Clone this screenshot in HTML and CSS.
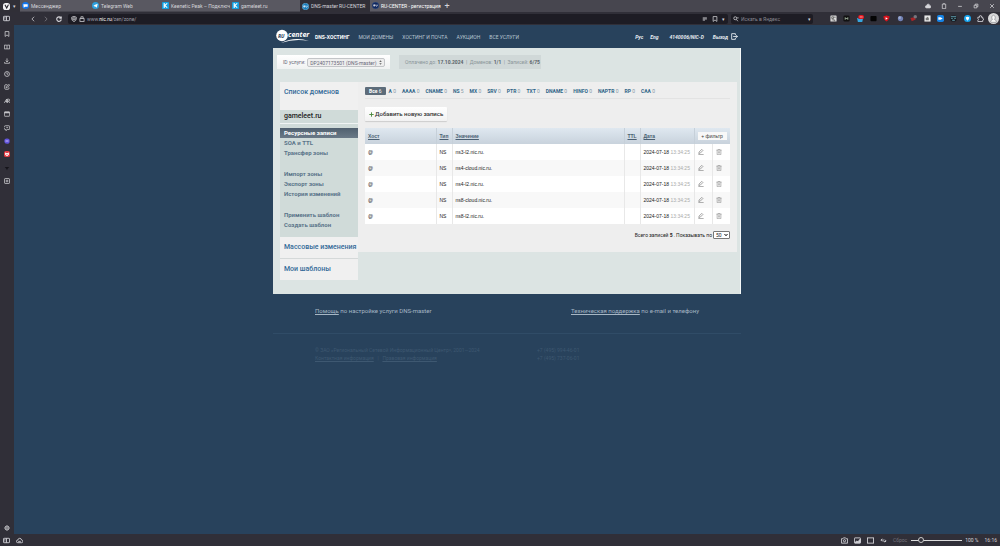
FILE: index.html
```html
<!DOCTYPE html>
<html lang="ru">
<head>
<meta charset="utf-8">
<title>RU-CENTER</title>
<link rel="stylesheet" href="styles.css">
</head>
<body>
<svg class="defs" aria-hidden="true">
  <symbol id="bookmark" viewBox="0 0 16 16"><path d="M3 1.500h10v13l-5-4-5 4z"/></symbol>
  <symbol id="panel" viewBox="0 0 16 16"><rect x="1" y="3" width="14" height="10" rx="1.500"/><path d="M8 3v10M3 6h2.500M3 9h2.500"/></symbol>
  <symbol id="book" viewBox="0 0 16 16"><path d="M1 3h5l2 1 2-1h5v10H1zM8 4v9"/></symbol>
  <symbol id="download" viewBox="0 0 16 16"><path d="M8 1v9M4.500 7L8 10.500 11.500 7M1.500 11v3h13v-3"/></symbol>
  <symbol id="clock" viewBox="0 0 16 16"><circle cx="8" cy="8" r="6.500"/><path d="M8 4v4.500h3"/></symbol>
  <symbol id="note" viewBox="0 0 16 16"><path d="M9 2H4Q2 2 2 4v8q0 2 2 2h7q2 0 2-2V9M6 10l1-3 6-6 2 2-6 6z"/></symbol>
  <symbol id="translate" viewBox="0 0 16 16"><path d="M1 13L7 3l1 10M4 9h4M9 13V3h3q3 0 3 2.500T12 8H9M12 8l3 5"/></symbol>
  <symbol id="window" viewBox="0 0 16 16"><rect x="1" y="2" width="14" height="12" rx="1.500"/><path d="M1 4.500h14" stroke-width="3"/></symbol>
  <symbol id="chat" viewBox="0 0 16 16"><path d="M4 2h9q2 0 2 2v6q0 2-2 2H9l-4 3v-3H4M1 6V4q0-2 3-2M1 8v2q0 2 3 2M6 7h5"/></symbol>
  <symbol id="plusbox" viewBox="0 0 16 16"><rect x="1.500" y="1.500" width="13" height="13" rx="1.500"/><path d="M8 4.500v7M4.500 8h7"/></symbol>
  <symbol id="gear" viewBox="0 0 16 16"><circle cx="8" cy="8" r="5"/><circle cx="8" cy="8" r="1.500"/><path d="M8 .5V3M8 13v2.500M.5 8H3M13 8h2.500M2.700 2.700l1.700 1.700M11.600 11.600l1.700 1.700M2.700 13.300l1.700-1.700M11.600 4.400l1.700-1.700"/></symbol>
  <symbol id="cloud" viewBox="0 0 16 16"><path d="M4 13q-3 0-3-3t3-3q1-4 4.500-4T13 7q2.500 0 2.500 3T13 13z" fill="currentColor"/></symbol>
  <symbol id="cloudline" viewBox="0 0 16 16"><path d="M4 13q-3 0-3-3t3-3q1-4 4.500-4T13 7q2.500 0 2.500 3T13 13zM5 10h6"/></symbol>
  <symbol id="camera" viewBox="0 0 16 16"><path d="M1 4h3l1.500-2h5L12 4h3v10H1z"/><circle cx="8" cy="8.500" r="2.500"/></symbol>
  <symbol id="image" viewBox="0 0 16 16"><rect x="1" y="2" width="14" height="12" rx="1"/><path d="M2 13l4-4 3 2 5-6v8z" fill="currentColor"/></symbol>
  <symbol id="square" viewBox="0 0 16 16"><rect x="1" y="2" width="14" height="12"/></symbol>
  <symbol id="code" viewBox="0 0 16 16"><path d="M5 4L2 7l3 3M3 7h6M11 6l3 3-3 3M8 10h5"/></symbol>
  <symbol id="pencil" viewBox="0 0 16 16"><path d="M2 12l1-4 7-7 3 3-7 7zM1 15h14"/></symbol>
  <symbol id="trash" viewBox="0 0 16 16"><path d="M1 3h14M5.500 3V1h5v2M3 3v12h10V3M6.500 6v6M9.500 6v6" stroke-width="1.500"/></symbol>
  <symbol id="exit" viewBox="0 0 16 16"><path d="M10 5V1.500H1.500v13H10V11M5 8h10M12 5l3 3-3 3"/></symbol>
  <symbol id="shield" viewBox="0 0 16 16"><path d="M8 1l6 2v5q0 4-6 7-6-3-6-7V3z"/><path d="M5 5h6v5H5z"/></symbol>
  <symbol id="lock" viewBox="0 0 16 16"><rect x="2.500" y="7" width="11" height="7.500"/><path d="M5 7V2h6v5"/></symbol>
  <symbol id="puzzle" viewBox="0 0 16 16"><path d="M2 5h4q-1-4 2-4t2 4h3v3q3 0 2 3l-2 1v3H2v-3q3-2 0-4z"/></symbol>
</svg>

<header class="tabbar">
  <button class="vivaldi" aria-label="Меню"><svg viewBox="0 0 16 16"><rect width="16" height="16" rx="6" fill="#f2f2f4"/><path d="M5 5l3.500 6.500L12 4.500" fill="none" stroke="#25242b" stroke-width="2.500" stroke-linecap="round"/></svg><span>▾</span></button>
  <nav class="tabs">
    <button class="tab"><svg class="fav" viewBox="0 0 16 16"><circle cx="8" cy="8" r="8" fill="#1277ee"/><path d="M3 5h10v6H7l-3 2z" fill="#fff"/></svg><span>Мессенджер</span></button>
    <button class="tab"><svg class="fav" viewBox="0 0 16 16"><circle cx="8" cy="8" r="8" fill="#2d9fdd"/><path d="M3 8l10-4-2 9-3-3-2 2V9z" fill="#fff"/></svg><span>Telegram Web</span></button>
    <button class="tab"><svg class="fav" viewBox="0 0 16 16"><rect width="16" height="16" rx="2" fill="#15a0df"/><path d="M5 2.500v11M12 3L6 8l6 5" fill="none" stroke="#fff" stroke-width="2.500"/></svg><span>Keenetic Peak – Подключи</span></button>
    <button class="tab"><svg class="fav" viewBox="0 0 16 16"><rect width="16" height="16" rx="2" fill="#15a0df"/><path d="M5 2.500v11M12 3L6 8l6 5" fill="none" stroke="#fff" stroke-width="2.500"/></svg><span>gameleet.ru</span></button>
    <button class="tab dark"><svg class="fav" viewBox="0 0 16 16"><circle cx="8" cy="8" r="7.500" fill="#167bbb" stroke="#8ed0f4"/><path d="M4 10V6h2q2 0 1 2H4l3 2M9 6v3q2 2 3 0V6" fill="none" stroke="#fff" stroke-width="1.300"/></svg><span>DNS-master RU-CENTER</span></button>
    <button class="tab active"><svg class="fav" viewBox="0 0 16 16"><circle cx="8" cy="8" r="7.500" fill="#10265c" stroke="#28518e"/><path d="M4 10V6h2q2 0 1 2H4l3 2M9 6v3q2 2 3 0V6" fill="none" stroke="#fff" stroke-width="1.300"/></svg><span>RU-CENTER - регистрация</span></button>
    <button class="newtab" aria-label="Новая вкладка">+</button>
  </nav>
  <div class="wincontrols">
    <svg class="ico"><use href="#cloud"/></svg>
    <svg class="ico" viewBox="0 0 16 16"><path d="M3.500 3h9v12h-9zM6 1.500h4"/></svg>
    <svg class="ico" viewBox="0 0 16 16"><path d="M3 9h10"/></svg>
    <svg class="ico" viewBox="0 0 16 16"><path d="M3 6h7v7H3zM6 6V3h7v7h-3"/></svg>
    <svg class="ico" viewBox="0 0 16 16"><path d="M3 3l10 10M13 3L3 13"/></svg>
  </div>
</header>

<div class="toolbar">
  <svg class="ico"><use href="#panel"/></svg>
  <div class="navbtns">
    <svg class="ico" viewBox="0 0 16 16"><path d="M11 2L5 8l6 6"/></svg>
    <svg class="ico dim" viewBox="0 0 16 16"><path d="M5 2l6 6-6 6"/></svg>
    <svg class="ico bold" viewBox="0 0 16 16"><path d="M13 5A6 6 0 1 0 14 9M14 1v5H9"/></svg>
  </div>
  <div class="urlbar">
    <svg class="ico"><use href="#shield"/></svg>
    <svg class="ico"><use href="#lock"/></svg>
    <span class="url">www.<b>nic.ru</b>/zen/zone/</span>
    <svg class="ico" viewBox="0 0 16 16"><path d="M2 5h11M2 8h11M2 11h6"/></svg>
    <svg class="ico"><use href="#bookmark"/></svg>
    <span class="caret">▾</span>
  </div>
  <label class="search">
    <svg class="ico" viewBox="0 0 16 16"><circle cx="6" cy="6" r="4"/><path d="M9 9l4 5M11 5h4"/></svg>
    <input type="text" placeholder="Искать в Яндекс" aria-label="Поиск">
    <span class="caret">▾</span>
  </label>
  <div class="exts">
    <svg viewBox="0 0 16 16"><rect x="1" y="1" width="14" height="14" rx="1" fill="#ddd"/><path d="M4 4h4v4H4zM9 5h4M4 11h4M9 9v4h3" stroke="#444" fill="none" stroke-width="1.500"/></svg>
    <svg viewBox="0 0 16 16"><rect x="1" y="1" width="14" height="14" rx="3" fill="#111"/><path d="M5 5v6M11 5v6M5 8h6" stroke="#9aaa98" stroke-width="2"/></svg>
    <svg viewBox="0 0 16 16"><path d="M0 6l6 3 8-2-2 9H2z" fill="#37a6df"/><rect x="3" y="0" width="13" height="9" rx="4" fill="#e31921"/><path d="M6 4.500h7" stroke="#f7b5b5" stroke-width="2"/></svg>
    <svg viewBox="0 0 16 16"><rect x="1" y="2" width="14" height="12" rx="2" fill="#050505"/></svg>
    <svg viewBox="0 0 16 16"><path d="M8 1l7 2q0 8-7 12Q1 11 1 3z" fill="#d5131c"/><path d="M6 5v6l5-3z" fill="#fff"/></svg>
    <svg viewBox="0 0 16 16"><circle cx="8" cy="8" r="6" fill="#7181b5"/><circle cx="6" cy="6" r="3" fill="#9cabd0"/></svg>
    <svg viewBox="0 0 16 16"><path d="M1 7l9-2 3 5-9 4z" fill="#a82427"/><circle cx="12" cy="4" r="4" fill="#77767e"/></svg>
    <svg viewBox="0 0 16 16"><rect x="1" y="1" width="14" height="14" fill="#e8e8e8"/><path d="M4 12V8l4-4 3 3v5" fill="#777"/></svg>
    <svg viewBox="0 0 16 16"><rect width="16" height="16" rx="4" fill="#1683e5"/><path d="M3 5h5l5 3-5 3H3z" fill="#fff"/></svg>
    <svg viewBox="0 0 16 16"><rect x="1" y="1" width="14" height="14" rx="4" fill="#13191e"/><path d="M2 4h12M3 8h3M10 8h3M5 12h6" stroke="#70b5c8" stroke-width="2"/></svg>
    <svg viewBox="0 0 16 16"><circle cx="8" cy="8" r="8" fill="#1aa6ef"/><path d="M4 5l4-1 4 1q0 6-4 8-4-2-4-8" fill="#fff"/></svg>
    <svg class="ico"><use href="#puzzle"/></svg>
  </div>
  <svg class="avatar" viewBox="0 0 20 20"><circle cx="10" cy="10" r="10" fill="#d8d8da"/><path d="M5 17v-3l3-2q-2-3-1-6 3-4 6 0 1 3-1 6l3 2v3z" fill="#f7f7f7" stroke="#77777d"/></svg>
</div>

<div class="middle">
  <aside class="rail">
    <div class="railtop">
      <svg class="ico"><use href="#bookmark"/></svg>
      <svg class="ico"><use href="#book"/></svg>
      <svg class="ico"><use href="#download"/></svg>
      <svg class="ico"><use href="#clock"/></svg>
      <svg class="ico"><use href="#note"/></svg>
      <svg class="ico"><use href="#translate"/></svg>
      <svg class="ico"><use href="#window"/></svg>
      <svg class="ico"><use href="#chat"/></svg>
      <svg class="railpic" viewBox="0 0 16 16"><path d="M1 6q0-5 6-5h2q6 0 6 5v5q-2 5-7 4Q1 15 1 10z" fill="#6255dc"/><path d="M4 6h8v4H4z" fill="#a99af0"/></svg>
      <svg class="railpic" viewBox="0 0 16 16"><rect width="16" height="16" rx="5" fill="#e23840"/><path d="M3 4l5 2 5-2v6l-5 4-5-4z" fill="#fff"/><path d="M6 8h4l-2 3z" fill="#e23840"/></svg>
      <svg class="railpic" viewBox="0 0 16 16"><path d="M2 5h12l-4 4-2 5-2-4z" fill="#15141a"/></svg>
      <svg class="ico"><use href="#plusbox"/></svg>
    </div>
    <svg class="ico"><use href="#gear"/></svg>
  </aside>

  <main class="viewport">
    <div class="page">
      <div class="sitehead">
        <svg class="logo" viewBox="0 0 36 16"><circle cx="6" cy="6.500" r="5.800" fill="#fff"/><text x="2" y="9" class="logoru">RU</text><text x="12" y="8" class="logotext">center</text><path d="M5 14q14-7 28-2-14-3-28 2z" fill="#fff"/></svg>
        <nav class="sitenav">
          <a href="#" class="current">DNS-ХОСТИНГ</a><a href="#">МОИ ДОМЕНЫ</a><a href="#">ХОСТИНГ И ПОЧТА</a><a href="#">АУКЦИОН</a><a href="#">ВСЕ УСЛУГИ</a>
        </nav>
        <div class="account">
          <a href="#">Рус</a><a href="#" class="eng">Eng</a><a href="#" class="login">4140006/NIC-D</a><a href="#" class="exit">Выход <svg class="ico"><use href="#exit"/></svg></a>
        </div>
      </div>

      <div class="board">
        <div class="service">
          <div class="picker"><label for="svc">ID услуги:</label>
            <div class="selectbox"><select id="svc"><option>DP2407173501 (DNS-master)</option></select><svg class="updown" viewBox="0 0 16 16"><path d="M4 6l4-5 4 5zM4 10l4 5 4-5z" fill="#666"/></svg></div></div>
          <div class="paid">Оплачено до: <b>17.10.2024</b> &nbsp;|&nbsp; Доменов: <b>1/1</b> &nbsp;|&nbsp; Записей: <b>6/75</b></div>
        </div>

        <div class="columns">
          <nav class="menu">
            <a href="#" class="big">Список доменов</a>
            <div class="zone">
              <a href="#" class="domain">gameleet.ru</a>
              <ul>
                <li><a href="#" class="on">Ресурсные записи</a></li>
                <li><a href="#">SOA и TTL</a></li>
                <li><a href="#">Трансфер зоны</a></li>
              </ul>
              <ul>
                <li><a href="#">Импорт зоны</a></li>
                <li><a href="#">Экспорт зоны</a></li>
                <li><a href="#">История изменений</a></li>
              </ul>
              <ul>
                <li><a href="#">Применить шаблон</a></li>
                <li><a href="#">Создать шаблон</a></li>
              </ul>
            </div>
            <a href="#" class="big mass">Массовые изменения</a>
            <a href="#" class="big mine">Мои шаблоны</a>
          </nav>

          <section class="records">
            <div class="types">
              <a href="#" class="on">Все <i>6</i></a><a href="#">A <i>0</i></a><a href="#">AAAA <i>0</i></a><a href="#">CNAME <i>0</i></a><a href="#">NS <i>5</i></a><a href="#">MX <i>0</i></a><a href="#">SRV <i>0</i></a><a href="#">PTR <i>0</i></a><a href="#">TXT <i>0</i></a><a href="#">DNAME <i>0</i></a><a href="#">HINFO <i>0</i></a><a href="#">NAPTR <i>0</i></a><a href="#">RP <i>0</i></a><a href="#">CAA <i>0</i></a>
            </div>
            <button class="add"><svg viewBox="0 0 16 16"><path d="M8 1v14M1 8h14" stroke="#4b8a3c" stroke-width="3"/></svg>Добавить новую запись</button>
            <table>
              <colgroup><col class="c-host"><col class="c-type"><col class="c-value"><col class="c-type"><col class="c-date"><col class="c-act"><col class="c-act"></colgroup>
              <thead><tr><th><a href="#">Хост</a></th><th><a href="#">Тип</a></th><th><a href="#">Значение</a></th><th><a href="#">TTL</a></th><th><a href="#">Дата</a></th><th colspan="2" class="filtercell"><button class="filter">+ фильтр</button></th></tr></thead>
              <tbody>
                <tr><td>@</td><td>NS</td><td>ns3-l2.nic.ru.</td><td></td><td>2024-07-18 <span>13:34:25</span></td><td><svg class="ico"><use href="#pencil"/></svg></td><td><svg class="ico"><use href="#trash"/></svg></td></tr>
                <tr><td>@</td><td>NS</td><td>ns4-cloud.nic.ru.</td><td></td><td>2024-07-18 <span>13:34:25</span></td><td><svg class="ico"><use href="#pencil"/></svg></td><td><svg class="ico"><use href="#trash"/></svg></td></tr>
                <tr><td>@</td><td>NS</td><td>ns4-l2.nic.ru.</td><td></td><td>2024-07-18 <span>13:34:25</span></td><td><svg class="ico"><use href="#pencil"/></svg></td><td><svg class="ico"><use href="#trash"/></svg></td></tr>
                <tr><td>@</td><td>NS</td><td>ns8-cloud.nic.ru.</td><td></td><td>2024-07-18 <span>13:34:25</span></td><td><svg class="ico"><use href="#pencil"/></svg></td><td><svg class="ico"><use href="#trash"/></svg></td></tr>
                <tr><td>@</td><td>NS</td><td>ns8-l2.nic.ru.</td><td></td><td>2024-07-18 <span>13:34:25</span></td><td><svg class="ico"><use href="#pencil"/></svg></td><td><svg class="ico"><use href="#trash"/></svg></td></tr>
              </tbody>
            </table>
            <div class="pager"><span>Всего записей <b>5</b> .</span><label for="per">Показывать по</label><div class="selectbox"><select id="per"><option>50</option></select><svg class="down" viewBox="0 0 16 16"><path d="M2 4l6 7 6-7" fill="none" stroke="#111" stroke-width="4"/></svg></div></div>
          </section>
        </div>
      </div>

      <div class="help">
        <p><a href="#">Помощь</a> по настройке услуги DNS-master</p>
        <p><a href="#">Техническая поддержка</a> по e-mail и телефону</p>
      </div>
      <footer class="legal">
        <div>© ЗАО «Региональный Сетевой Информационный Центр», 2001—2024<br><a href="#">Контактная информация</a> &nbsp; | &nbsp; <a href="#">Правовая информация</a></div>
        <div>+7 (495) 994-46-01<br>+7 (495) 737-06-01</div>
      </footer>
    </div>
  </main>
</div>

<footer class="statusbar">
  <svg class="ico"><use href="#panel"/></svg>
  <svg class="ico"><use href="#cloudline"/></svg>
  <div class="statusright">
    <svg class="ico"><use href="#camera"/></svg>
    <svg class="ico"><use href="#image"/></svg>
    <svg class="ico"><use href="#square"/></svg>
    <svg class="ico"><use href="#code"/></svg>
    <label for="zoom" class="reset">Сброс</label>
    <input type="range" id="zoom" min="0" max="100" value="16">
    <span class="pct">100 %</span>
    <span>16:16</span>
  </div>
</footer>
</body>
</html>
```
FILE: styles.css
```css
* { box-sizing: border-box; }
body {
  margin: 0;
  height: 100vh;
  display: flex;
  flex-direction: column;
  overflow: hidden;
  background: #28425c;
  color: #d5d5da;
  font: 5px/8px Roboto, "Liberation Sans", sans-serif;
}
button, input, select { font: inherit; color: inherit; margin: 0; padding: 0; border: 0; background: none; }
a { color: inherit; text-decoration: none; }
.defs { position: absolute; width: 0; height: 0; }
.ico { width: 7px; height: 7px; flex: none; fill: none; stroke: currentColor; stroke-width: 2; }
.bold { stroke-width: 3; }
.dim { opacity: 0.5; }

/* browser frame */
.tabbar { display: flex; height: 12px; background: #47464f; }
.vivaldi { width: 20px; display: flex; align-items: center; gap: 3px; padding-left: 3px; background: #302f37; }
.vivaldi svg { width: 7px; height: 7px; }
.tabs { display: flex; flex: 1; }
.tab {
  width: 70px;
  height: 11px;
  padding: 0 0 0 2px;
  display: flex;
  align-items: center;
  gap: 2px;
  white-space: nowrap;
  background: #595861;
}
.tab.dark { height: 12px; background: #302f37; }
.tab.active { background: #5c5b64; color: #fff; }
.fav { width: 7px; height: 7px; flex: none; }
.newtab { width: 14px; font-size: 9px; }
.wincontrols { display: flex; align-items: center; width: 75px; justify-content: space-between; padding-right: 5px; }
.wincontrols .ico { width: 6px; height: 6px; }

.toolbar { display: flex; align-items: center; height: 13px; padding: 0 1px 0 3px; background: #302f38; }
.toolbar > .ico { margin-right: 20px; }
.navbtns { display: flex; gap: 7px; padding-right: 6px; }
.navbtns .ico { width: 6px; height: 6px; }
.urlbar, .search { display: flex; align-items: center; height: 10px; background: #1d1c24; border-radius: 2px; }
.urlbar { flex: 1; gap: 2px; padding: 0 3px; }
.urlbar .ico { width: 6px; height: 6px; }
.url { flex: 1; color: #9c9ba5; }
.url b { color: #fff; font-weight: normal; }
.urlbar .ico ~ .url ~ .ico { margin-right: 2px; }
.search { width: 82px; margin-left: 3px; padding: 0 2px; gap: 2px; }
.search .ico { width: 6px; height: 6px; }
.search input { flex: 1; min-width: 0; }
.search input::placeholder { color: #898892; opacity: 1; }
.exts { display: flex; justify-content: space-between; width: 154px; margin: 0 4px 0 17px; }
.exts svg { width: 7px; height: 7px; }
.avatar { width: 11px; height: 11px; }

.middle { display: flex; flex: 1; min-height: 0; }
.rail { width: 14px; display: flex; flex-direction: column; justify-content: space-between; align-items: center; padding: 6px 1px 3px 0; background: #302f38; }
.railtop { display: flex; flex-direction: column; justify-content: space-between; height: 153px; }
.rail .ico, .railpic { width: 6px; height: 6px; display: block; }
.viewport { flex: 1; min-width: 0; }

.statusbar { display: flex; align-items: center; gap: 6px; height: 12px; padding: 0 3px; background: #302f38; }
.statusright { display: flex; align-items: center; gap: 6px; margin-left: auto; }
.reset { color: #74737d; }
.statusright input { appearance: none; width: 51px; height: 6px; margin-left: -2px; background: linear-gradient(#ddd, #ddd) center / 100% 1px no-repeat; }
.statusright input::-webkit-slider-thumb { appearance: none; width: 6px; height: 6px; border-radius: 50%; border: 1px solid #ccc; background: #302f38; }
.pct { margin-left: -3px; }

/* site */
.page { max-width: 468px; margin: 0 auto; }
.sitehead { display: flex; align-items: center; height: 23px; padding-left: 3px; color: #b9c6d2; }
.logo { width: 36px; height: 16px; margin-right: 3px; }
.logotext { font: italic bold 7px "Open Sans", sans-serif; fill: #fff; }
.logoru { font: italic bold 5px "Open Sans", sans-serif; fill: #28425c; }
.sitenav { display: flex; gap: 9px; }
.sitenav .current { color: #fff; font-weight: bold; }
.account { display: flex; gap: 7px; margin-left: auto; padding-right: 3px; font-weight: bold; font-style: italic; color: #e6ebf0; }
.login { margin: 0 2px 0 4px; }
.exit { display: flex; gap: 3px; }

.board { background: #dce4e3; border-right: 1px solid #f4f8f8; padding: 7px 3px 14px 4px; color: #333; }
.service { display: flex; gap: 9px; }
.picker, .paid { display: flex; align-items: center; height: 14px; padding: 0 6px; white-space: pre; }
.picker { background: linear-gradient(#fff, #f0f2f2); color: #667; gap: 2px; width: 113px; }
.selectbox { position: relative; display: flex; }
.selectbox select { appearance: none; }
.picker select { width: 78px; height: 9px; padding: 0 6px 0 2px; border: 1px solid #c3c5c8; border-radius: 2px; background: #eee; }
.updown, .down { position: absolute; top: 2px; right: 2px; width: 5px; height: 5px; pointer-events: none; }
.paid { background: #d0d8d8; color: #8a9598; width: 142px; }
.paid b { color: #5a6468; }

.columns { display: flex; align-items: flex-start; margin: 13px 0 0 3px; }
.menu { width: 78px; background: #f0f0f0; color: #5a7489; font-weight: bold; white-space: nowrap; }
.menu a { display: block; padding: 0 4px; }
.menu .big { font-size: 7px; line-height: 21px; font-weight: 500; color: #336a98; }
.menu .big:first-child { padding-bottom: 7px; }
.zone { background: #d0dbd9; padding-bottom: 7px; }
.zone .domain { font-size: 7px; line-height: 13px; font-weight: 500; color: #222; border-bottom: 1px solid #f0f4f4; margin-bottom: 4px; }
.zone ul { list-style: none; margin: 0 0 11px; padding: 0; font-size: 6px; line-height: 10px; }
.zone ul:last-child { margin: 0; }
.zone .on { background: linear-gradient(#50606f, #6a7987); color: #fff; }
.menu .mine { border-top: 1px solid #d5d9d9; }

.records { flex: 1; min-width: 0; background: #eee; padding: 0 7px 13px; }
.types { display: flex; gap: 6px; height: 17px; padding-top: 5px; border-bottom: 1px solid #e3e3e3; font-weight: bold; color: #2f6487; white-space: nowrap; }
.types i { font-style: normal; font-weight: normal; color: #8799a6; }
.types .on { height: 8px; margin-right: -3px; padding: 0 4px; border-radius: 1px; background: #5d6c7a; color: #fff; }
.types .on i { color: #fff; }
.add { display: flex; align-items: center; gap: 1px; height: 14px; margin: 8px 0 7px; padding: 0 4px; background: linear-gradient(#fff, #f2f2f2); border-radius: 1px; box-shadow: 0 1px 1px #ccc; font-size: 6px; font-weight: 500; white-space: nowrap; }
.add svg { width: 5px; height: 5px; }

table { width: 100%; table-layout: fixed; border-collapse: collapse; background: #fff; color: #222; font-family: "Liberation Sans", Arial, sans-serif; }
.c-host { width: 71px; }
.c-type { width: 16px; }
.c-date { width: 54px; }
.c-act { width: 18px; }
th, td { height: 16px; padding: 0 0 0 3px; text-align: left; white-space: nowrap; border-left: 1px solid #e8e8e8; }
th { border-color: #c6d0d9; color: #4a5f72; }
th:first-child, td:first-child { border-left: 0; }
thead tr { background: linear-gradient(#dfe8f0, #c8d2dc); }
th a { text-decoration: underline; }
tbody tr:nth-child(even) { background: #f8f8f8; }
td span { color: #aaa; }
td .ico { display: block; width: 6px; height: 6px; color: #888; }
.filter { width: 29px; height: 8px; background: #f8f8f8; color: #333; display: block; font-weight: normal; }
.pager { display: flex; justify-content: flex-end; align-items: center; gap: 1px; padding-top: 7px; color: #222; }
.pager select { width: 17px; height: 8px; padding: 0 0 0 2px; line-height: 6px; border: 1px solid #777; border-radius: 1px; background: #fff; }
.pager .down { width: 4px; height: 4px; }

.help { display: grid; grid-template-columns: 256px 1fr; padding: 12px 0 18px 42px; border-bottom: 1px solid #304c67; font-size: 6px; line-height: 9px; color: #a6b6c4; }
.help p { margin: 0; }
.help a, .legal a { text-decoration: underline; }
.legal { display: grid; grid-template-columns: 222px 1fr; padding: 12px 0 0 42px; color: #3e5871; }
```
